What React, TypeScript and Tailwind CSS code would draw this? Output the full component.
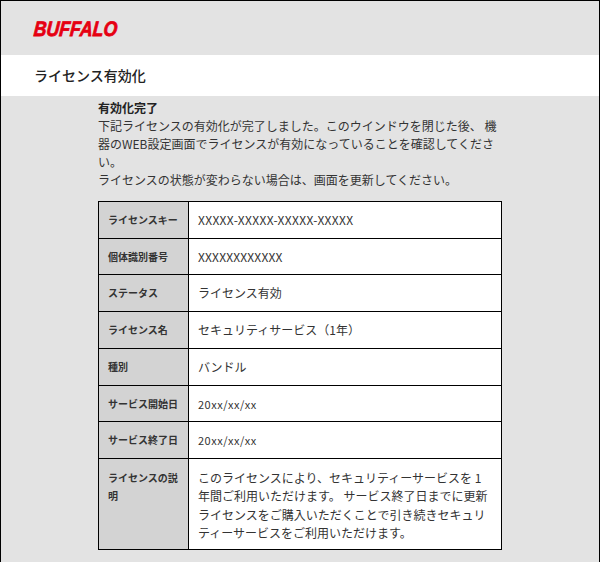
const rows: { label: string; value: string; h: string; cell?: string }[] = [
  { label: 'ライセンスキー', value: 'XXXXX-XXXXX-XXXXX-XXXXX', h: 'h-[37px]', cell: 'text-[12px] tracking-[0.33px]' },
  { label: '個体識別番号', value: 'XXXXXXXXXXXX', h: 'h-[36px]', cell: 'text-[12px] tracking-[0.17px]' },
  { label: 'ステータス', value: 'ライセンス有効', h: 'h-[37px]' },
  { label: 'ライセンス名', value: 'セキュリティサービス（1年）', h: 'h-[37px]' },
  { label: '種別', value: 'バンドル', h: 'h-[37px]' },
  { label: 'サービス開始日', value: '20xx/xx/xx', h: 'h-[36px]', cell: 'text-[11px] tracking-[0.5px]' },
  { label: 'サービス終了日', value: '20xx/xx/xx', h: 'h-[37px]', cell: 'text-[11px] tracking-[0.5px]' },
];

export default function App() {
  return (
    <div className="h-[562px] w-[600px] overflow-hidden border-x border-t border-black bg-[#e3e3e3] text-[#333] [font-family:'Noto_Sans_CJK_JP',sans-serif]">
      <div className="flex h-[54px] items-center pl-[33px]">
        <span className="origin-left -skew-x-[6deg] scale-x-[0.84] text-[21px] leading-none font-bold text-[#e60012] italic [-webkit-text-stroke:0.8px_#e60012] [font-family:'Liberation_Sans',sans-serif]">
          BUFFALO
        </span>
      </div>
      <div className="flex h-[41px] items-center bg-white pl-[33px] text-[14px] font-medium text-[#222]">
        ライセンス有効化
      </div>
      <div className="ml-[97px] w-[404px] pt-[3px] text-[12px] leading-[18px]">
        <p className="font-bold text-[#222]">有効化完了</p>
        <p>下記ライセンスの有効化が完了しました。このウインドウを閉じた後、 機器のWEB設定画面でライセンスが有効になっていることを確認してください。</p>
        <p>ライセンスの状態が変わらない場合は、画面を更新してください。</p>
        <table className="mt-[12px] w-[404px] table-fixed border-collapse border border-black bg-white">
          <tbody>
            {rows.map((r) => (
              <tr key={r.label} className={r.h}>
                <th className="w-[90px] border border-black bg-[#d3d3d3] pl-[9px] text-left text-[10px] font-bold text-[#333]">{r.label}</th>
                <td className={`border border-black pl-[9px] ${r.cell ?? 'text-[12px]'}`}>{r.value}</td>
              </tr>
            ))}
            <tr className="h-[91px]">
              <th className="border border-black bg-[#d3d3d3] pt-[10px] pr-1 pl-[9px] text-left align-top text-[10px] leading-[18px] font-bold text-[#333]">ライセンスの説明</th>
              <td className="border border-black pt-[3px] pr-2 pl-[9px] text-[12px] leading-[18.4px]">
                このライセンスにより、セキュリティーサービスを 1 年間ご利用いただけます。 サービス終了日までに更新ライセンスをご購入いただくことで引き続きセキュリティーサービスをご利用いただけます。
              </td>
            </tr>
          </tbody>
        </table>
      </div>
    </div>
  );
}
